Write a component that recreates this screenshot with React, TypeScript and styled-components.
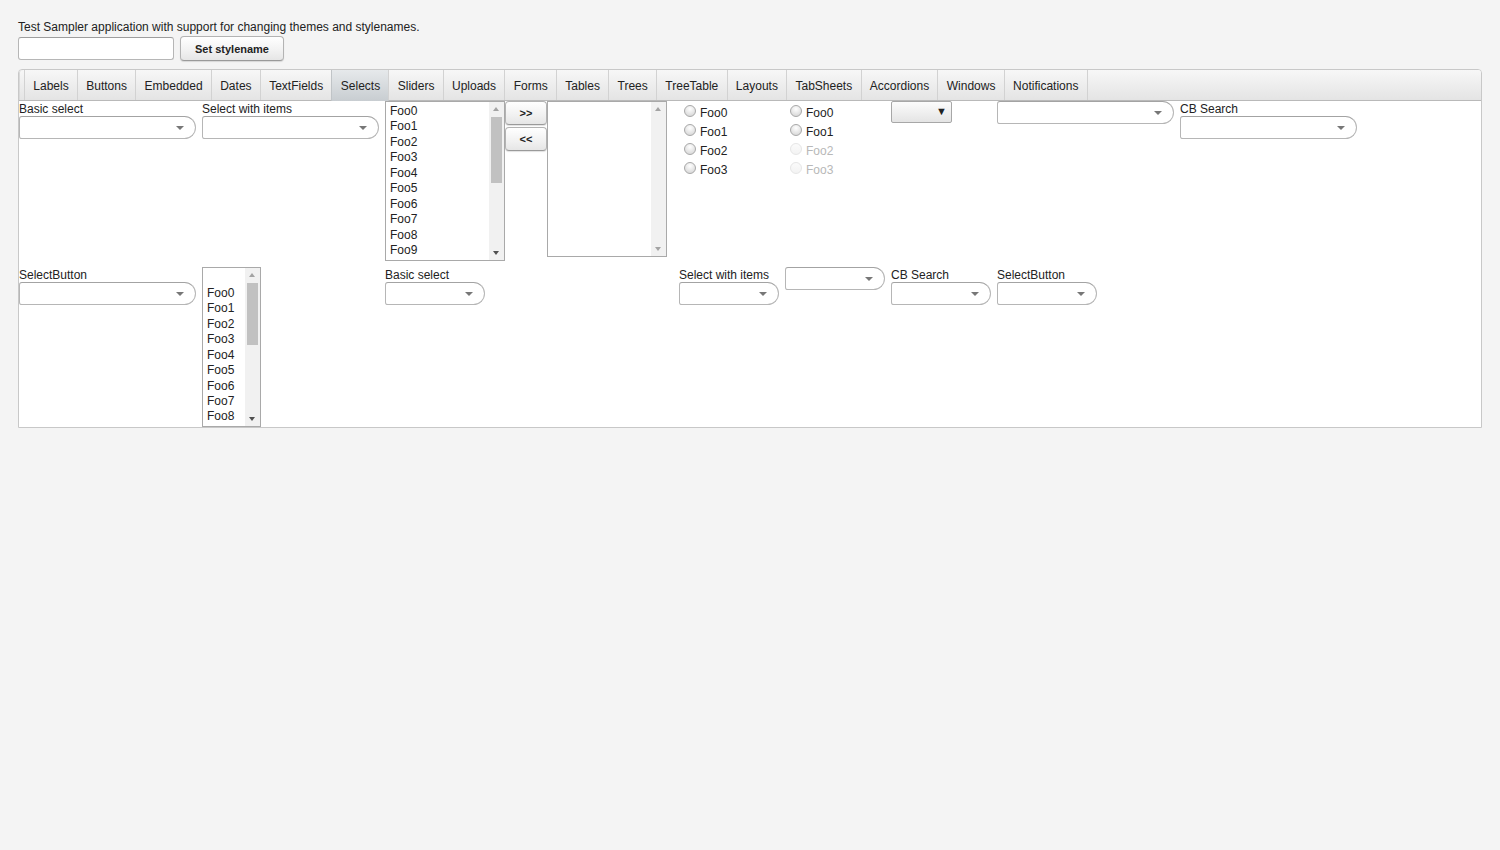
import React from "react";
import styled, { createGlobalStyle, css } from "styled-components";

const Global = createGlobalStyle`
  html, body { margin: 0; padding: 0; background: #f4f4f4; }
  body { font-family: "Liberation Sans", Arial, sans-serif; font-size: 12px; color: #222; }
  * { box-sizing: border-box; }
`;

const Page = styled.div`
  padding: 20px 18px 0 18px;
  width: 1500px;
`;

const Intro = styled.div`
  font-size: 12px;
  line-height: 15px;
  color: #222;
  height: 16px;
`;

const StyleRow = styled.div`
  display: flex;
  align-items: center;
  gap: 6px;
  height: 25px;
`;

const TextInput = styled.div`
  width: 156px;
  height: 23px;
  background: #fff;
  border: 1px solid #b6b6b6;
  border-top-color: #9d9d9d;
  border-radius: 3px;
`;

const Button = styled.div<{ $w?: number; $h?: number }>`
  width: ${(p) => p.$w ?? 104}px;
  height: ${(p) => p.$h ?? 25}px;
  display: flex;
  align-items: center;
  justify-content: center;
  font-weight: bold;
  font-size: 11px;
  color: #222;
  border: 1px solid #b3b3b3;
  border-bottom-color: #9a9a9a;
  border-radius: 4px;
  background: linear-gradient(#ffffff, #f1f1f1 60%, #e6e6e6);
  box-shadow: 0 1px 1px rgba(0,0,0,0.12);
`;

const Sheet = styled.div`
  margin-top: 8px;
  width: 1464px;
  border: 1px solid #c8c8c8;
  border-radius: 4px 4px 0 0;
  background: #fff;
`;

const TabBar = styled.div`
  display: flex;
  height: 31px;
  padding-left: 5px;
  background: linear-gradient(#f7f7f7, #e4e4e4);
  border-bottom: 1px solid #b9b9b9;
  border-radius: 3px 3px 0 0;
  box-shadow: inset 1px 0 0 #d9d9d9;
`;

const Tab = styled.div<{ $active?: boolean }>`
  padding: 1px 8.3px 0;
  height: 30px;
  display: flex;
  align-items: center;
  font-size: 12px;
  color: #222;
  border-left: 1px solid #d2d2d2;
  &:last-child { border-right: 1px solid #d2d2d2; }
  ${(p) =>
    p.$active &&
    css`
      background: linear-gradient(#e6e9eb, #c8cdd1);
      border-left-color: #c0c4c7;
      box-shadow: 1px 0 0 #c0c4c7;
      height: 31px;
      color: #222;
    `}
`;

const Grid = styled.div`
  display: grid;
  grid-template-columns: 177px 177px 288px 100px 100px 100px 177px 177px;
  grid-template-rows: 160px 160px;
  column-gap: 6px;
  row-gap: 6px;
`;

const Cell = styled.div`
  display: flex;
  flex-direction: column;
  align-items: flex-start;
  min-width: 0;
`;

const Caption = styled.div`
  font-size: 12px;
  line-height: 14px;
  height: 15px;
  padding-top: 1px;
  color: #222;
  white-space: nowrap;
`;

const ComboBox = styled.div<{ $w: number }>`
  position: relative;
  width: ${(p) => p.$w}px;
  height: 23px;
  background: #fff;
  border: 1px solid #b6b6b6;
  border-top-color: #a3a3a3;
  border-radius: 3px 12px 12px 3px;
  flex-shrink: 0;
`;

const ComboArrow = styled.span`
  position: absolute;
  right: 11px;
  top: 9px;
  width: 0;
  height: 0;
  border-left: 4px solid transparent;
  border-right: 4px solid transparent;
  border-top: 4px solid #777;
`;

const Combo = ({ w }: { w: number }) => (
  <ComboBox $w={w}>
    <ComboArrow />
  </ComboBox>
);

const ListBox = styled.div<{ $w: number; $h: number }>`
  position: relative;
  width: ${(p) => p.$w}px;
  height: ${(p) => p.$h}px;
  border: 1px solid #a9a9a9;
  background: #fff;
  overflow: hidden;
  flex-shrink: 0;
`;

const ListItems = styled.div<{ $top: number }>`
  padding: ${(p) => p.$top}px 0 0 4px;
`;

const ListItem = styled.div`
  font-size: 12px;
  line-height: 15.45px;
  height: 15.45px;
  color: #222;
`;

const Scroll = styled.div`
  position: absolute;
  right: 0;
  top: 0;
  bottom: 0;
  width: 15px;
  background: #f1f1f1;
`;

const Thumb = styled.div<{ $top: number; $h: number }>`
  position: absolute;
  left: 2px;
  right: 2px;
  top: ${(p) => p.$top}px;
  height: ${(p) => p.$h}px;
  background: #c1c1c1;
`;

const ArrowUp = styled.span<{ $dark?: boolean }>`
  position: absolute;
  left: 4px;
  top: 5px;
  border-left: 3.5px solid transparent;
  border-right: 3.5px solid transparent;
  border-bottom: 4px solid ${(p) => (p.$dark ? "#505050" : "#a3a3a3")};
`;

const ArrowDown = styled.span<{ $dark?: boolean }>`
  position: absolute;
  left: 4px;
  bottom: 5px;
  border-left: 3.5px solid transparent;
  border-right: 3.5px solid transparent;
  border-top: 4px solid ${(p) => (p.$dark ? "#505050" : "#a3a3a3")};
`;

const TwinWrap = styled.div`
  display: flex;
  align-items: flex-start;
`;

const TwinButtons = styled.div`
  display: flex;
  flex-direction: column;
  gap: 2px;
  width: 42px;
`;

const RadioGroup = styled.div`
  display: flex;
  flex-direction: column;
  padding: 2px 0 0 5px;
`;

const RadioRow = styled.div<{ $disabled?: boolean }>`
  display: flex;
  align-items: center;
  height: 19px;
  gap: 4px;
  color: ${(p) => (p.$disabled ? "#b8b8b8" : "#222")};
  font-size: 12px;
`;

const RadioCircle = styled.span<{ $disabled?: boolean }>`
  width: 12px;
  height: 12px;
  border-radius: 50%;
  margin-top: -4px;
  border: 1px solid ${(p) => (p.$disabled ? "#e6e6e6" : "#a8a8a8")};
  background: ${(p) =>
    p.$disabled
      ? "linear-gradient(#fbfbfb, #f3f3f3)"
      : "radial-gradient(circle at 50% 30%, #ffffff, #dcdcdc 75%)"};
`;

const NativeSelect = styled.div`
  position: relative;
  width: 61px;
  height: 22px;
  border: 1px solid #a7a7a7;
  border-radius: 2px;
  background: linear-gradient(#fcfcfc, #e4e4e4);
`;

const NativeArrow = styled.span`
  position: absolute;
  right: 4px;
  top: 3px;
  font-size: 11px;
  color: #222;
`;

const ListSelect = ({
  w,
  h,
  items,
  top,
  thumb,
  disabledScroll,
}: {
  w: number;
  h: number;
  items: string[];
  top: number;
  thumb?: { top: number; h: number };
  disabledScroll?: boolean;
}) => (
  <ListBox $w={w} $h={h}>
    <ListItems $top={top}>
      {items.map((it, i) => (
        <ListItem key={i}>{it || "\u00a0"}</ListItem>
      ))}
    </ListItems>
    <Scroll>
      <ArrowUp />
      {thumb && <Thumb $top={thumb.top} $h={thumb.h} />}
      <ArrowDown $dark={!disabledScroll} />
    </Scroll>
  </ListBox>
);

const Radios = ({ disabled }: { disabled?: boolean }) => (
  <RadioGroup>
    {["Foo0", "Foo1", "Foo2", "Foo3"].map((f, i) => {
      const d = disabled && i >= 2;
      return (
        <RadioRow key={f} $disabled={d}>
          <RadioCircle $disabled={d} />
          {f}
        </RadioRow>
      );
    })}
  </RadioGroup>
);

const tabs = [
  "Labels", "Buttons", "Embedded", "Dates", "TextFields", "Selects", "Sliders", "Uploads",
  "Forms", "Tables", "Trees", "TreeTable", "Layouts", "TabSheets", "Accordions", "Windows", "Notifications",
];

const foos = (n: number) => Array.from({ length: n }, (_, i) => `Foo${i}`);

export default function App() {
  return (
    <>
      <Global />
      <Page>
        <Intro>Test Sampler application with support for changing themes and stylenames.</Intro>
        <StyleRow>
          <TextInput />
          <Button>Set stylename</Button>
        </StyleRow>
        <Sheet>
          <TabBar>
            {tabs.map((t) => (
              <Tab key={t} $active={t === "Selects"}>{t}</Tab>
            ))}
          </TabBar>
          <Grid>
            <Cell>
              <Caption>Basic select</Caption>
              <Combo w={177} />
            </Cell>
            <Cell>
              <Caption>Select with items</Caption>
              <Combo w={177} />
            </Cell>
            <Cell>
              <TwinWrap>
                <ListSelect w={120} h={160} items={foos(10)} top={2} thumb={{ top: 15, h: 66 }} />
                <TwinButtons>
                  <Button $w={42} $h={24}>&gt;&gt;</Button>
                  <Button $w={42} $h={24}>&lt;&lt;</Button>
                </TwinButtons>
                <ListSelect w={120} h={156} items={[]} top={0} disabledScroll />
              </TwinWrap>
            </Cell>
            <Cell>
              <Radios />
            </Cell>
            <Cell>
              <Radios disabled />
            </Cell>
            <Cell>
              <NativeSelect>
                <NativeArrow>▼</NativeArrow>
              </NativeSelect>
            </Cell>
            <Cell>
              <Combo w={177} />
            </Cell>
            <Cell>
              <Caption>CB Search</Caption>
              <Combo w={177} />
            </Cell>

            <Cell>
              <Caption>SelectButton</Caption>
              <Combo w={177} />
            </Cell>
            <Cell>
              <ListSelect w={59} h={160} items={["", ...foos(9)]} top={2.5} thumb={{ top: 15, h: 62 }} />
            </Cell>
            <Cell>
              <Caption>Basic select</Caption>
              <Combo w={100} />
            </Cell>
            <Cell>
              <Caption>Select with items</Caption>
              <Combo w={100} />
            </Cell>
            <Cell>
              <Combo w={100} />
            </Cell>
            <Cell>
              <Caption>CB Search</Caption>
              <Combo w={100} />
            </Cell>
            <Cell>
              <Caption>SelectButton</Caption>
              <Combo w={100} />
            </Cell>
          </Grid>
        </Sheet>
      </Page>
    </>
  );
}
